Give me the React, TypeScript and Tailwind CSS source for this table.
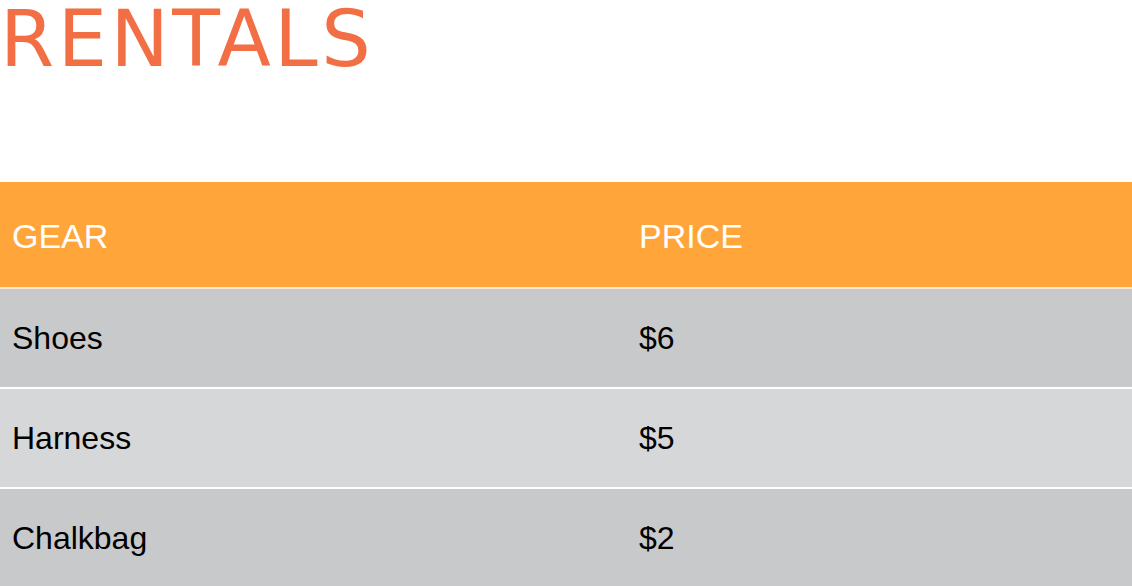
const rentals = [
  { gear: "Shoes", price: "$6" },
  { gear: "Harness", price: "$5" },
  { gear: "Chalkbag", price: "$2" },
];

export default function App() {
  return (
    <div className="w-[1132px] h-[586px] overflow-hidden bg-white font-['Liberation_Sans',Arial,sans-serif]">
      <h1 className="text-[78px] leading-[78px] font-['DejaVu_Sans',sans-serif] text-[#f26f45] tracking-[3.5px]">
        RENTALS
      </h1>
      <table className="mt-[104px] w-full border-collapse">
        <thead>
          <tr className="bg-[#ffa53a] h-[106px] border-b-2 border-[#fbe9d4]">
            <th className="w-[627px] pl-3 pt-1 text-left font-normal text-[34px] text-white">GEAR</th>
            <th className="pl-3 pt-1 text-left font-normal text-[34px] text-white">PRICE</th>
          </tr>
        </thead>
        <tbody>
          {rentals.map((r, i) => (
            <tr
              key={r.gear}
              className={`h-[100px] border-b-2 border-white ${i % 2 === 0 ? "bg-[#c8c9cb]" : "bg-[#d6d7d9]"}`}
            >
              <td className="pl-3 text-[32px] text-black">{r.gear}</td>
              <td className="pl-3 text-[32px] text-black">{r.price}</td>
            </tr>
          ))}
        </tbody>
      </table>
    </div>
  );
}
